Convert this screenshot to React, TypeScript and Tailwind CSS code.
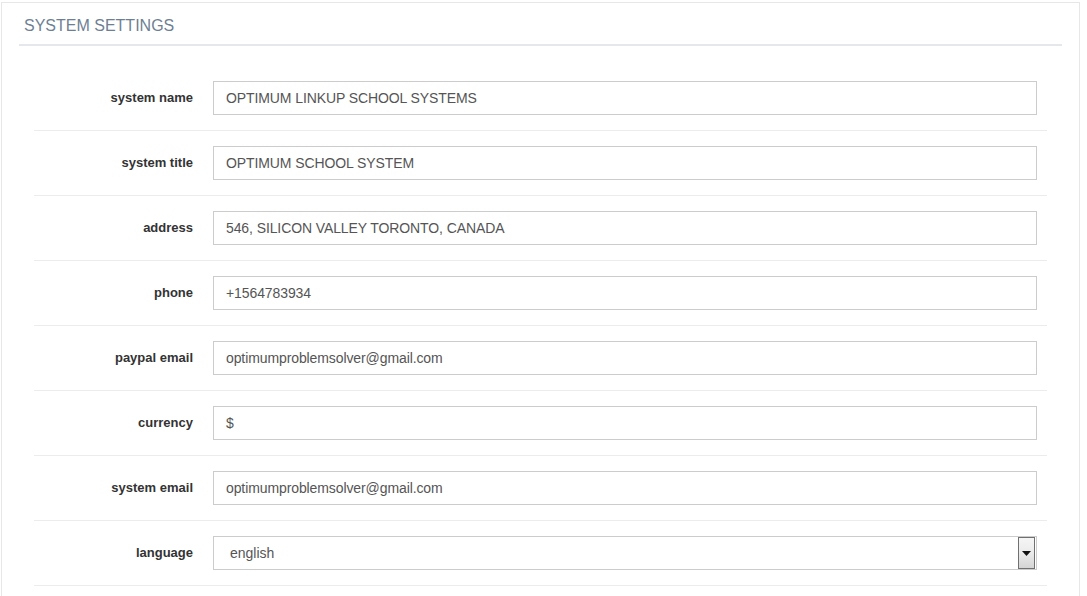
import React from 'react';

const fields = [
  { label: 'system name', value: 'OPTIMUM LINKUP SCHOOL SYSTEMS' },
  { label: 'system title', value: 'OPTIMUM SCHOOL SYSTEM' },
  { label: 'address', value: '546, SILICON VALLEY TORONTO, CANADA' },
  { label: 'phone', value: '+1564783934' },
  { label: 'paypal email', value: 'optimumproblemsolver@gmail.com' },
  { label: 'currency', value: '$' },
  { label: 'system email', value: 'optimumproblemsolver@gmail.com' },
];

function Row({ label, children }: { label: string; children: React.ReactNode }) {
  return (
    <div className="flex items-center h-[65px] border-b border-[#ececec]">
      <div className="w-[179px] pr-[20px] text-right text-[13px] font-bold text-[#333]">{label}</div>
      <div className="flex-1 mr-[10px]">{children}</div>
    </div>
  );
}

export default function App() {
  return (
    <div
      className="min-h-screen bg-white pt-[2px] pl-[1px]"
      style={{ fontFamily: '"Liberation Sans", Arial, sans-serif' }}
    >
      <div className="w-[1079px] h-[620px] border border-[#e7e7ea] px-[17px]">
        <div className="h-[43px] border-b-2 border-[#e4e8ed] pl-[5px] pt-[11px] text-[16px] text-[#6e7f94]">
          SYSTEM SETTINGS
        </div>
        <div className="mx-[15px] mt-[20px]">
          {fields.map((f) => (
            <Row key={f.label} label={f.label}>
              <div className="h-[34px] border border-[#ccc] flex items-center px-[12px] text-[14px] text-[#555] tracking-[-0.1px]">
                {f.value}
              </div>
            </Row>
          ))}
          <Row label="language">
            <div className="h-[34px] border border-[#ccc] flex items-center pl-[16px] pr-[1px] text-[14px] text-[#555]">
              <span className="flex-1">english</span>
              <div className="w-[17px] h-[32px] border border-[#707070] bg-gradient-to-b from-[#f5f5f5] via-[#ebebeb] to-[#d4d4d4] flex items-center justify-center">
                <svg width="9" height="5" viewBox="0 0 9 5">
                  <polygon points="0,0 9,0 4.5,5" fill="#111" />
                </svg>
              </div>
            </div>
          </Row>
        </div>
      </div>
    </div>
  );
}
